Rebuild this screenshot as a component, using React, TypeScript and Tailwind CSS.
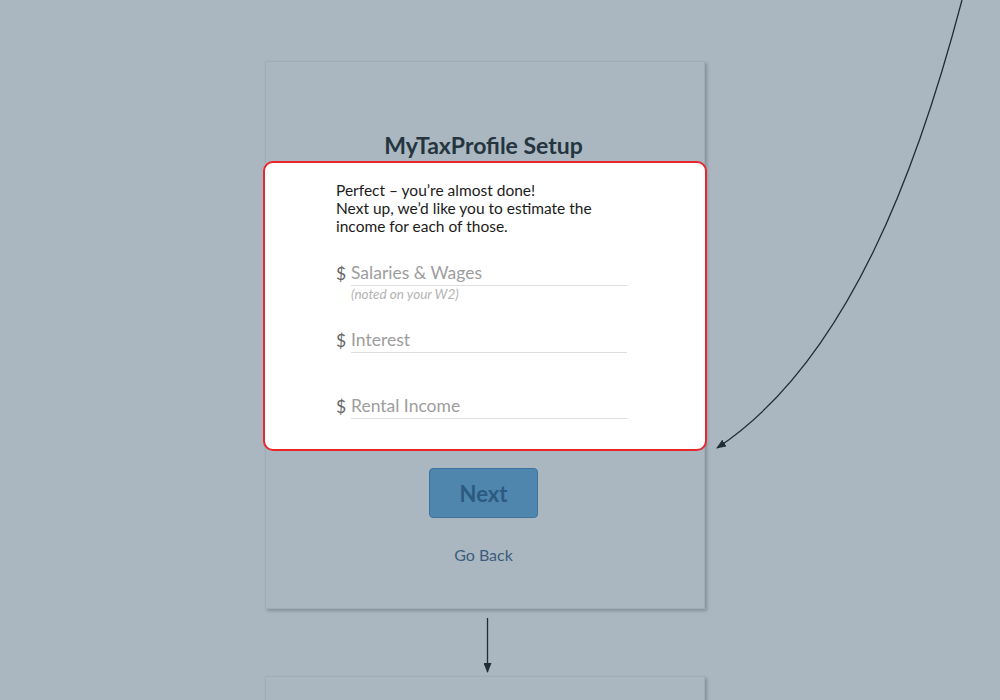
import React from 'react';

const fields = [
  { label: 'Salaries & Wages', hint: '(noted on your W2)', h: 'h-[67px]' },
  { label: 'Interest', h: 'h-[66px]' },
  { label: 'Rental Income', h: '' },
];

const Field = ({ label, hint, h }: { label: string; hint?: string; h: string }) => (
  <div className={h}>
    <div className="flex items-end">
      <span className="w-[15px] text-[17.5px] leading-[24px] text-[#666]">$</span>
      <div className="w-[276px] border-b border-[#dedede] text-[17.5px] leading-[24px] text-[#9d9d9d]">{label}</div>
    </div>
    {hint && (
      <div className="mt-[1px] pl-[15px] text-[13.5px] italic leading-[15px] text-[#b3b3b3]">{hint}</div>
    )}
  </div>
);

export default function App() {
  return (
    <div className="relative h-[700px] w-[1000px] overflow-hidden bg-[#aab7c0] font-['Lato','Open_Sans',sans-serif]">
      <div className="flex flex-col items-center pt-[61px]">
        {/* setup card */}
        <div className="ml-[-30px] flex h-[548px] w-[440px] flex-col items-center border border-[#9fadb7] bg-[#aab7c0] pt-[68px] shadow-[2px_2px_3px_rgba(40,55,70,0.3)]">
          <h1 className="mr-[3px] text-[23px] font-bold leading-[31px] text-[#243540]">MyTaxProfile Setup</h1>

          <div className="mx-[-3px] w-[444px] self-center rounded-[10px] border-2 border-[#e8262b] bg-white pb-[30px] pl-[71px] pt-[18px]">
            <p className="text-[15.5px] leading-[18px] text-[#1b1b1b]">
              Perfect – you’re almost done!
              <br />
              Next up, we’d like you to estimate the
              <br />
              income for each of those.
            </p>
            <div className="mt-[26px] flex flex-col">
              {fields.map((f) => (
                <Field key={f.label} label={f.label} hint={f.hint} h={f.h} />
              ))}
            </div>
          </div>

          <button className="mr-[3px] mt-[17px] h-[50px] w-[109px] rounded-[4px] border border-[#3e73a0] bg-[#4f86ae] text-[22px] font-bold text-[#2c5a80]">
            Next
          </button>
          <div className="mr-[3px] mt-[27px] text-[16px] leading-[20px] text-[#3c5d7d]">Go Back</div>
        </div>

        {/* next card */}
        <div className="ml-[-30px] mt-[67px] h-[60px] w-[440px] border border-[#9fadb7] bg-[#aab7c0] shadow-[2px_2px_3px_rgba(40,55,70,0.3)]" />
      </div>

      {/* connectors */}
      <svg className="pointer-events-none absolute left-0 top-0" width="1000" height="700">
        <defs>
          <marker id="head" markerWidth="10" markerHeight="8" refX="9" refY="4" orient="auto" markerUnits="userSpaceOnUse">
            <path d="M0,0 L10,4 L0,8 Z" fill="#1f2d36" />
          </marker>
        </defs>
        <path d="M962,0 C920,160 850,360 717,448" fill="none" stroke="#1f2d36" strokeWidth="1.3" markerEnd="url(#head)" />
        <path d="M487.5,618 L487.5,672" fill="none" stroke="#1f2d36" strokeWidth="1.3" markerEnd="url(#head)" />
      </svg>
    </div>
  );
}
